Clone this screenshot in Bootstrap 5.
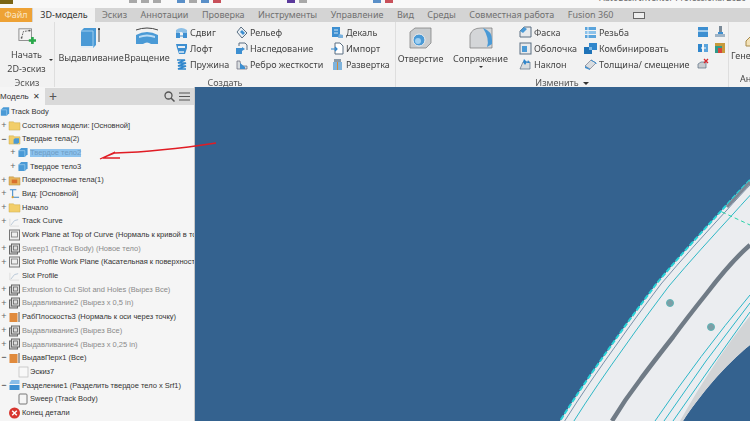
<!DOCTYPE html>
<html lang="en">
<head>
  <meta charset="UTF-8">
  <title>Autodesk Inventor</title>
  <link rel="stylesheet" href="https://cdn.jsdelivr.net/npm/bootstrap@5.3.2/dist/css/bootstrap.min.css">
  <style>
    html, body { height: 421px; overflow: hidden; }
    body { font-family: "Noto Sans", sans-serif; font-size: 9px; line-height: 1; color: #333; background: #f2f2f2; position: relative; filter: blur(.35px); }

    .title-strip { height: 8px; background: #f8f8f8; overflow: hidden; gap: 4px; }
    .app-logo { width: 13px; height: 4px; background: #7a6414; }
    .qa { width: 8px; height: 3px; background: #a8a8a8; }
    .qa.blue { background: #5a8fc8; }
    .qa.purple { background: #5b3a9c; }
    .qa.red { background: #c8505a; }
    .qa-gap-1 { margin-left: 112px; }
    .qa-gap-2 { margin-left: 12px; }
    .qa-gap-3 { margin-left: 62px; }
    .title-text { margin-left: auto; margin-top: -6px; font-size: 8.5px; color: #666; white-space: nowrap; }

    .tabs { height: 14px; background: #d4d4d4; }
    .tabs span { color: #707070; font-size: 9px; line-height: 14px; white-space: nowrap; }
    .tabs .file-tab { width: 32px; background: #eea235; color: #fbe6c4; text-align: center; }
    .tabs .active-tab { width: 62px; margin-left: 1px; background: #f2f2f2; color: #333; text-align: center; }
    .tab-list { gap: 13.5px; margin-left: 7px; }
    .panel-icon { width: 12px; height: 7px; margin: 4px 0 0 6px; border: 1px solid #666; background: #eee; }

    .ribbon { height: 65px; background: #f2f2f2; }
    .group { flex: none; display: flex; flex-direction: column; border-right: 1px solid #dedede; height: 65px; }
    .group-body { flex: 1; display: flex; min-height: 0; }
    .group-label { height: 11px; text-align: center; font-size: 9px; line-height: 11px; padding-top: 1px; color: #555; white-space: nowrap; }
    .g-sketch { width: 55px; }
    .g-create { width: 341px; }
    .g-modify { width: 333px; }
    .big-btn { display: flex; flex-direction: column; align-items: center; text-align: center; color: #444; white-space: nowrap; flex: none; padding-top: 5px; }
    .big-btn .lbl { margin-top: 5px; }
    .btn-start { width: 53px; }
    .btn-start .lbl { margin-top: 3px; line-height: 14px; }
    .btn-extrude { width: 64px; }
    .btn-revolve { width: 48px; }
    .btn-hole { width: 49px; }
    .btn-fillet { width: 71px; }
    .col-btns { display: flex; flex-direction: column; padding-top: 2px; flex: none; }
    .col-btns div { height: 16px; display: flex; align-items: center; gap: 2px; white-space: nowrap; color: #444; }
    .col-btns svg { flex: none; }
    .c-60 { width: 60px; }
    .c-96 { width: 96px; }
    .c-65 { width: 65px; margin-left: 3px; }
    .c-113 { width: 113px; }
    .gap-5px { gap: 5px !important; }
    .tri { display: inline-block; width: 0; height: 0; border-left: 2px solid transparent; border-right: 2px solid transparent; border-top: 2px solid #333; }
    .tri-start { flex: none; margin: 37px 0 0 -4px; }
    .tri-fillet { margin-top: 3px; }
    .tri-label { margin: 0 0 1px 4px; vertical-align: middle; border-left-width: 3px; border-right-width: 3px; border-top-width: 3px; }
    .g-rest { padding: 13px 0 0 2px; color: #444; }
    .g-rest .house { display: block; margin: 0 0 4px 14px; }
    .g-rest .an { display: block; margin: 14px 0 0 9px; }

    .main { height: 334px; }
    .browser { width: 195px; flex: none; background: #f5f5f5; border-right: 1px solid #c8c8c8; overflow: hidden; }
    .browser-head { height: 17px; background: #d9d9d9; margin-top: 1px; }
    .model-tab { width: 45px; background: #f5f5f5; font-family: "Liberation Sans", sans-serif; font-size: 8px; color: #333; display: flex; align-items: center; justify-content: space-between; padding-right: 5px; overflow: hidden; }
    .plus { font-size: 14px; color: #555; margin-left: 4px; }
    .node { height: 13.68px; display: flex; align-items: center; white-space: nowrap; font-family: "Liberation Sans", sans-serif; font-size: 7.5px; color: #333; }
    .node.off { color: #8a8a8a; }
    .node.selected .txt { background: #8dc3ee; color: #6e9cc4; }
    .pm { width: 8px; flex: none; color: #666; text-align: center; font-size: 9px; }
    .pm.open { color: #111; }
    .ind2 { padding-left: 9px; }
    .node svg { flex: none; margin-right: 1px; }
    .canvas { flex: 1; background: #34628f; }
    .canvas svg { display: block; }
    .scribble { position: absolute; left: 0; top: 0; pointer-events: none; }
  </style>
</head>
<body>

  <svg width="0" height="0" class="position-absolute">
    <!-- browser icons -->
    <symbol id="folder" viewBox="0 0 12 12"><path d="M0 2h5l1 1h6v8H0z" fill="#f2ce6a" stroke="#c9a84a" stroke-width=".5"/></symbol>
    <symbol id="folder-solid" viewBox="0 0 12 12"><path d="M0 2h5l1 1h6v8H0z" fill="#f2ce6a" stroke="#c9a84a" stroke-width=".5"/><path d="M5 6l1.500-1.500H11V9l-1.500 1.500H5z" fill="#4a9ad6"/></symbol>
    <symbol id="folder-surf" viewBox="0 0 12 12"><path d="M0 2h5l1 1h6v8H0z" fill="#e6b45c" stroke="#b08a3a" stroke-width=".5"/><path d="M3 5h6v4H3z" fill="#d9702c"/></symbol>
    <symbol id="cube" viewBox="0 0 12 12"><path d="M1 4l3-3h7v7l-3 3H1z" fill="#4a9ad6"/><path d="M1 4h7v7" fill="none" stroke="#a8d4f2" stroke-width=".7"/></symbol>
    <symbol id="plane" viewBox="0 0 12 12"><rect x="1" y="1" width="10" height="10" fill="#eee" stroke="#777"/><rect x="3" y="3" width="6" height="5" fill="none" stroke="#777" stroke-width=".8"/></symbol>
    <symbol id="sketch" viewBox="0 0 12 12"><path d="M2 10L6 5l4-1" fill="none" stroke="#b6c6d6"/><path d="M1 3v8h10" fill="none" stroke="#ddd"/></symbol>
    <symbol id="sketch-sq" viewBox="0 0 12 12"><rect x="2" y="1" width="9" height="10" fill="#f8f8f8" stroke="#bbb" stroke-width=".7"/></symbol>
    <symbol id="extr" viewBox="0 0 12 12"><rect x="1" y="3" width="8" height="8" fill="#ccc" stroke="#666"/><rect x="3" y="1" width="8" height="8" fill="#ddd" stroke="#666"/><rect x="5" y="3" width="4" height="4" fill="none" stroke="#666" stroke-width=".8"/></symbol>
    <symbol id="orange" viewBox="0 0 12 12"><rect x="1" y="2" width="8" height="9" fill="#e08a3c"/><path d="M10.500 1v10" stroke="#555"/></symbol>
    <symbol id="shade" viewBox="0 0 12 12"><path d="M1 4l2-3h8v4H1z" fill="#88bde8"/><rect x="1" y="6" width="10" height="5" fill="#3d8fd1"/></symbol>
    <symbol id="sheet" viewBox="0 0 12 12"><rect x="2" y="1" width="8" height="10" rx="1" fill="#f5f5f5" stroke="#777"/></symbol>
    <symbol id="stop" viewBox="0 0 12 12"><circle cx="6" cy="6" r="5.500" fill="#d8362f"/><path d="M3.700 3.700l4.600 4.600M8.300 3.700l-4.600 4.600" stroke="#fff" stroke-width="1.400"/></symbol>
    <symbol id="axes" viewBox="0 0 12 12"><path d="M1 2h7M4 2v8h7" fill="none" stroke="#3a86c8" stroke-width="1.100"/><circle cx="4" cy="10" r="1.200" fill="#d8a030"/></symbol>
    <!-- ribbon icons -->
    <symbol id="sweep" viewBox="0 0 13 13"><path d="M1 4q5-4 11 0v3H8q-2-2-4 0H1z" fill="#8cbfe6"/><path d="M1 7h4v5H1zM8 7h4v5H8z" fill="#3d8fd1"/><path d="M5 10h3" stroke="#3d8fd1"/></symbol>
    <symbol id="loft" viewBox="0 0 13 13"><path d="M1 2h11v4l-2 6H4L2 6z" fill="#3d8fd1"/><path d="M3 4h7v2H3z" fill="#e8eef4"/><path d="M4 9h5v2H4z" fill="#b9d6ee"/></symbol>
    <symbol id="coil" viewBox="0 0 13 13"><path d="M2 2h8L3 5h8L3 8h8l-8 3h8" fill="none" stroke="#2f86cc" stroke-width="1.700"/></symbol>
    <symbol id="emboss" viewBox="0 0 13 13"><path d="M2 6l4-5 6 6-5 5z" fill="#e8eef4" stroke="#5a6f82"/><path d="M5 6l2-2 3 3-2 2z" fill="#3d8fd1"/></symbol>
    <symbol id="derive" viewBox="0 0 13 13"><path d="M1 6h6v6H1z" fill="#3d8fd1"/><path d="M4 4V1h6l2 2v5" fill="none" stroke="#5a6f82"/><path d="M7 5l3 2-3 2z" fill="#3d8fd1"/></symbol>
    <symbol id="rib" viewBox="0 0 13 13"><path d="M2 11V3h3l1 5h6v3z" fill="#d8dcdf" stroke="#667" stroke-width=".7"/><path d="M5 5l5 4v2H5z" fill="#3d8fd1"/></symbol>
    <symbol id="decal" viewBox="0 0 13 13"><rect x="1" y="1" width="8" height="10" fill="#3d8fd1"/><path d="M3 4h4M3 7h4" stroke="#cfe6f7"/><path d="M8 8l4 1v3H7z" fill="#79b0dc"/></symbol>
    <symbol id="import" viewBox="0 0 13 13"><path d="M4 1h5l3 3v8H4z" fill="#fff" stroke="#5a6f82"/><path d="M0 7h6M4 5l2 2-2 2" fill="none" stroke="#2f86cc" stroke-width="1.200"/></symbol>
    <symbol id="unfold" viewBox="0 0 13 13"><path d="M3 1h7v3H3z" fill="#8a9aa8"/><path d="M2 4h9v8H2z" fill="#7eb3dc"/><path d="M6.500 4v8" stroke="#d08a3c"/></symbol>
    <symbol id="chamfer" viewBox="0 0 13 13"><path d="M1 5l4-4h7v10H1z" fill="#e8eaec" stroke="#5a6f82"/><path d="M1 5l4-4 3 2-4 4z" fill="#4a9ad6"/></symbol>
    <symbol id="shell" viewBox="0 0 13 13"><rect x="1" y="1" width="11" height="11" fill="#e8eaec" stroke="#5a6f82"/><path d="M3 4h5v6H3z" fill="#4a9ad6"/></symbol>
    <symbol id="draft" viewBox="0 0 13 13"><path d="M1 11l3-7h7v7z" fill="#d8dcdf" stroke="#5a6f82" stroke-width=".7"/><path d="M5 1l3 3-2 3-2-3zM9 2l2 3H8z" fill="#2f86cc"/></symbol>
    <symbol id="thread" viewBox="0 0 13 13"><path d="M1 1h11v3H1z" fill="#5aa4dc"/><path d="M1 5h11v3H1z" fill="#8cc2ea"/><path d="M1 9h11v3H1z" fill="#5aa4dc"/><path d="M4 1v11" stroke="#e8f2fa"/></symbol>
    <symbol id="combine" viewBox="0 0 13 13"><path d="M5 1h8v7H5z" fill="#2f86cc"/><path d="M0 5h8v7H0z" fill="#1f73b8"/><path d="M5 5h3v3H5z" fill="#7fbce8"/></symbol>
    <symbol id="thick" viewBox="0 0 13 13"><path d="M1 8l6-6 5 3-6 6z" fill="#d8dcdf" stroke="#667" stroke-width=".6"/><path d="M1 8l5 3v1L1 10z" fill="#3d8fd1"/><path d="M7 2l5 3v1" fill="none" stroke="#3d8fd1"/></symbol>
    <symbol id="block" viewBox="0 0 12 12"><rect x="1" y="1" width="10" height="10" fill="#3d8fd1"/><path d="M1 5h10" stroke="#d9ecfa" stroke-width="1.300"/></symbol>
    <symbol id="stem" viewBox="0 0 12 12"><path d="M5 0h3v7H5z" fill="#7a8a98"/><path d="M1 8h10v3H1z" fill="#9fb4c6"/><path d="M4 6h5v2H4z" fill="#3d8fd1"/></symbol>
    <symbol id="split" viewBox="0 0 12 12"><path d="M1 2h4v8H1z" fill="#2f86cc"/><path d="M7 2h4v8H7z" fill="#5aa4dc"/><path d="M4 6h5" stroke="#fff"/></symbol>
    <symbol id="color" viewBox="0 0 12 12"><rect x="1" y="1" width="10" height="10" fill="#c79a3c"/><path d="M1 4h7v7H1z" fill="#2f9a8a"/><path d="M4 6h4v5H4z" fill="#d8453c"/></symbol>
    <symbol id="delface" viewBox="0 0 12 12"><path d="M1 6l3-2h5v6H1z" fill="#c8ccd0" stroke="#5a6f82" stroke-width=".7"/><path d="M7 1l4 4M11 1L7 5" stroke="#d8262c" stroke-width="1.300"/></symbol>
  </svg>

  <!-- Title strip -->
  <div class="title-strip d-flex">
    <div class="app-logo"></div>
    <div class="qa qa-gap-1"></div><div class="qa"></div><div class="qa"></div>
    <div class="qa blue qa-gap-2"></div><div class="qa"></div>
    <div class="qa blue"></div><div class="qa red"></div>
    <div class="qa purple qa-gap-3"></div><div class="qa"></div>
    <div class="qa blue qa-gap-3"></div><div class="qa red"></div>
    <span class="title-text pe-1">Autodesk Inventor Professional 2020</span>
  </div>

  <!-- Ribbon tabs -->
  <div class="tabs d-flex">
    <span class="file-tab">Файл</span>
    <span class="active-tab">3D-модель</span>
    <div class="d-flex tab-list">
      <span>Эскиз</span><span>Аннотации</span><span>Проверка</span><span>Инструменты</span><span>Управление</span><span>Вид</span><span>Среды</span><span>Совместная работа</span><span>Fusion 360</span>
      <div class="panel-icon"></div>
    </div>
  </div>

  <!-- Ribbon -->
  <div class="ribbon d-flex">
    <div class="group g-sketch">
      <div class="group-body">
        <div class="big-btn btn-start">
          <svg width="22" height="20" viewBox="0 0 22 20"><rect x="2" y="2" width="14" height="13" fill="none" stroke="#888"/><path d="M5 12l2-7 7-1" fill="none" stroke="#555" stroke-dasharray="2 1"/><circle cx="5" cy="12" r="1" fill="#555"/><circle cx="14" cy="4" r="1" fill="#555"/><path d="M17 11v8M13 15h8" stroke="#29a84a" stroke-width="3"/></svg>
          <span class="lbl">Начать<br>2D-эскиз</span>
        </div>
        <span class="tri tri-start"></span>
      </div>
      <div class="group-label">Эскиз</div>
    </div>

    <div class="group g-create">
      <div class="group-body ps-1">
        <div class="big-btn btn-extrude">
          <svg width="22" height="21" viewBox="0 0 22 21"><path d="M1 4l3-3h12v17l-3 3H1z" fill="#4a9ad6"/><path d="M1 4h12v17" fill="none" stroke="#9fcdee"/><path d="M1 19h12v2H1z" fill="#e4eef6"/><path d="M19 2v13" stroke="#444"/><circle cx="19" cy="2" r="1" fill="#222"/></svg>
          <span class="lbl">Выдавливание</span>
        </div>
        <div class="big-btn btn-revolve">
          <svg width="26" height="21" viewBox="0 0 26 21"><path d="M2 8q11-6 22 0v9h-7q-4-3-8 0H2z" fill="#4a9ad6"/><path d="M5 9q8-3 16 0v2q-8-3-16 0z" fill="#bcdcf4"/><path d="M2 3q11-4 22 0" fill="none" stroke="#444"/></svg>
          <span class="lbl">Вращение</span>
        </div>
        <div class="col-btns ms-1 c-60">
          <div><svg width="13" height="13"><use href="#sweep"/></svg>Сдвиг</div>
          <div><svg width="13" height="13"><use href="#loft"/></svg>Лофт</div>
          <div><svg width="13" height="13"><use href="#coil"/></svg>Пружина</div>
        </div>
        <div class="col-btns c-96">
          <div><svg width="13" height="13"><use href="#emboss"/></svg>Рельеф</div>
          <div><svg width="13" height="13"><use href="#derive"/></svg>Наследование</div>
          <div><svg width="13" height="13"><use href="#rib"/></svg>Ребро жесткости</div>
        </div>
        <div class="col-btns">
          <div><svg width="13" height="13"><use href="#decal"/></svg>Декаль</div>
          <div><svg width="13" height="13"><use href="#import"/></svg>Импорт</div>
          <div><svg width="13" height="13"><use href="#unfold"/></svg>Развертка</div>
        </div>
      </div>
      <div class="group-label">Создать</div>
    </div>

    <div class="group g-modify">
      <div class="group-body">
        <div class="big-btn btn-hole">
          <svg width="24" height="22" viewBox="0 0 24 22"><path d="M1 5l5-4h16v15l-5 5H1z" fill="#c9ccce" stroke="#777" stroke-width=".7"/><circle cx="10" cy="13" r="6" fill="#4a9ad6" stroke="#eee"/><circle cx="9" cy="14" r="3" fill="#9fd0f2"/></svg>
          <span class="lbl">Отверстие</span>
        </div>
        <div class="big-btn btn-fillet">
          <svg width="24" height="22" viewBox="0 0 24 22"><path d="M1 8Q3 1 12 1h11v20H1z" fill="#d4d6d8" stroke="#777" stroke-width=".7"/><path d="M14 1q9 3 9 12v4l-5 3q3-8-4-19z" fill="#4a9ad6"/></svg>
          <span class="lbl">Сопряжение</span>
          <span class="tri tri-fillet"></span>
        </div>
        <div class="col-btns c-65">
          <div><svg width="13" height="13"><use href="#chamfer"/></svg>Фаска</div>
          <div><svg width="13" height="13"><use href="#shell"/></svg>Оболочка</div>
          <div><svg width="13" height="13"><use href="#draft"/></svg>Наклон</div>
        </div>
        <div class="col-btns c-113">
          <div><svg width="13" height="13"><use href="#thread"/></svg>Резьба</div>
          <div><svg width="13" height="13"><use href="#combine"/></svg>Комбинировать</div>
          <div><svg width="13" height="13"><use href="#thick"/></svg>Толщина/ смещение</div>
        </div>
        <div class="col-btns">
          <div class="gap-5px"><svg width="12" height="12"><use href="#block"/></svg><svg width="12" height="12"><use href="#stem"/></svg></div>
          <div class="gap-5px"><svg width="12" height="12"><use href="#split"/></svg><svg width="12" height="12"><use href="#color"/></svg></div>
          <div><svg width="12" height="12"><use href="#delface"/></svg></div>
        </div>
      </div>
      <div class="group-label">Изменить<span class="tri tri-label"></span></div>
    </div>

    <div class="g-rest flex-grow-1 overflow-hidden text-nowrap">
      <svg class="house" width="12" height="12" viewBox="0 0 12 12"><path d="M1 6l5-5 5 5v5H1z" fill="#f3e2b8" stroke="#a88a4a"/></svg>
      Генерация
      <span class="an">Анализ</span>
    </div>
  </div>

  <!-- Model browser and graphics window -->
  <div class="main d-flex">
    <div class="browser">
      <div class="browser-head d-flex align-items-center">
        <div class="model-tab h-100"><span>Модель</span><span>✕</span></div>
        <span class="plus">+</span>
        <svg class="ms-auto" width="11" height="11" viewBox="0 0 11 11"><circle cx="4.500" cy="4.500" r="3.500" fill="none" stroke="#555" stroke-width="1.300"/><path d="M7 7l3.500 3.500" stroke="#555" stroke-width="1.500"/></svg>
        <svg class="mx-1" width="11" height="11" viewBox="0 0 11 11"><path d="M0 2h11M0 5.500h11M0 9h11" stroke="#555" stroke-width="1.200"/></svg>
      </div>
      <div class="tree">
        <div class="node"><svg width="10" height="11"><use href="#cube"/></svg>Track Body</div>
        <div class="node"><span class="pm">+</span><svg width="13" height="11"><use href="#folder"/></svg>Состояния модели: [Основной]</div>
        <div class="node"><span class="pm open">−</span><svg width="13" height="11"><use href="#folder-solid"/></svg>Твердые тела(2)</div>
        <div class="node ind2 selected"><span class="pm">+</span><svg width="12" height="11"><use href="#cube"/></svg><span class="txt">Твердое тело2</span></div>
        <div class="node ind2"><span class="pm">+</span><svg width="12" height="11"><use href="#cube"/></svg>Твердое тело3</div>
        <div class="node"><span class="pm">+</span><svg width="13" height="11"><use href="#folder-surf"/></svg>Поверхностные тела(1)</div>
        <div class="node"><span class="pm">+</span><svg width="13" height="11"><use href="#axes"/></svg>Вид: [Основной]</div>
        <div class="node"><span class="pm">+</span><svg width="13" height="11"><use href="#folder"/></svg>Начало</div>
        <div class="node"><span class="pm">+</span><svg width="13" height="11"><use href="#sketch"/></svg>Track Curve</div>
        <div class="node"><span class="pm"></span><svg width="13" height="12"><use href="#plane"/></svg>Work Plane at Top of Curve (Нормаль к кривой в точке)</div>
        <div class="node off"><span class="pm">+</span><svg width="13" height="12"><use href="#extr"/></svg>Sweep1 (Track Body) (Новое тело)</div>
        <div class="node"><span class="pm">+</span><svg width="13" height="12"><use href="#plane"/></svg>Slot Profile Work Plane (Касательная к поверхности)</div>
        <div class="node"><span class="pm"></span><svg width="13" height="11"><use href="#sketch"/></svg>Slot Profile</div>
        <div class="node off"><span class="pm">+</span><svg width="13" height="12"><use href="#extr"/></svg>Extrusion to Cut Slot and Holes (Вырез Все)</div>
        <div class="node off"><span class="pm">+</span><svg width="13" height="12"><use href="#extr"/></svg>Выдавливание2 (Вырез x 0,5 in)</div>
        <div class="node"><span class="pm">+</span><svg width="13" height="12"><use href="#orange"/></svg>РабПлоскость3 (Нормаль к оси через точку)</div>
        <div class="node off"><span class="pm">+</span><svg width="13" height="12"><use href="#extr"/></svg>Выдавливание3 (Вырез Все)</div>
        <div class="node off"><span class="pm">+</span><svg width="13" height="12"><use href="#extr"/></svg>Выдавливание4 (Вырез x 0,25 in)</div>
        <div class="node"><span class="pm open">−</span><svg width="13" height="12"><use href="#orange"/></svg>ВыдавПерх1 (Все)</div>
        <div class="node ind2"><span class="pm"></span><svg width="12" height="12"><use href="#sketch-sq"/></svg>Эскиз7</div>
        <div class="node"><span class="pm open">−</span><svg width="13" height="12"><use href="#shade"/></svg>Разделение1 (Разделить твердое тело x Srf1)</div>
        <div class="node ind2"><span class="pm"></span><svg width="12" height="12"><use href="#sheet"/></svg>Sweep (Track Body)</div>
        <div class="node"><span class="pm"></span><svg width="13" height="12"><use href="#stop"/></svg>Конец детали</div>
      </div>
    </div>

    <div class="canvas">
      <svg width="555" height="334" viewBox="195 87 555 334">
        <defs><path id="rim" d="M750 180C740 190 731 200 722 210C700 234 678 258 657 283C642 303 627 323 613 343C595 368 577 394 560 421" fill="none"/></defs>
        <path d="M750 180C740 190 731 200 722 210C700 234 678 258 657 283C642 303 627 323 613 343C595 368 577 394 560 421H683C700 395 725 365 750 345z" fill="#ebedf0"/>
        <path d="M750 316C727 344 702 382 680 421H683C700 395 725 365 750 345z" fill="#d2d4d6"/>
        <path d="M750 245C735 258 720 276 707 293C695 308 684 322 673 337C662 351 651 365 640 380C630 393 621 406 612 421" fill="none" stroke="#707b86" stroke-width="4.500"/>
        <use href="#rim" stroke="#27d3d8" stroke-width="2" stroke-dasharray="5 2"/>
        <use href="#rim" x="4" y="1" stroke="#5a7898" stroke-width=".8"/>
        <use href="#rim" x="12" y="3" stroke="#2fb8c6"/>
        <path d="M750 295Q700 355 655 421M750 303Q705 360 664 421M750 312Q712 365 673 421" fill="none" stroke="#2cb6c8"/>
        <path d="M750 182L727 207" stroke="#7d8794" stroke-width="3"/>
        <path d="M722 212L750 225" stroke="#27d3a8" stroke-dasharray="4 3"/>
        <circle cx="670" cy="303" r="3.500" fill="#7d9ea6" stroke="#5eb6b8"/>
        <circle cx="711" cy="327" r="3.500" fill="#7d9ea6" stroke="#5eb6b8"/>
      </svg>
    </div>
  </div>

  <!-- Red hand-drawn arrow, lies over the browser and the canvas -->
  <svg class="scribble" width="750" height="421" viewBox="0 0 750 421">
    <path d="M216 143C190 147 150 152 115 153L100 159L115 152L103 158L120 158" fill="none" stroke="#e01c24" stroke-width="1.300"/>
  </svg>

</body>
</html>
